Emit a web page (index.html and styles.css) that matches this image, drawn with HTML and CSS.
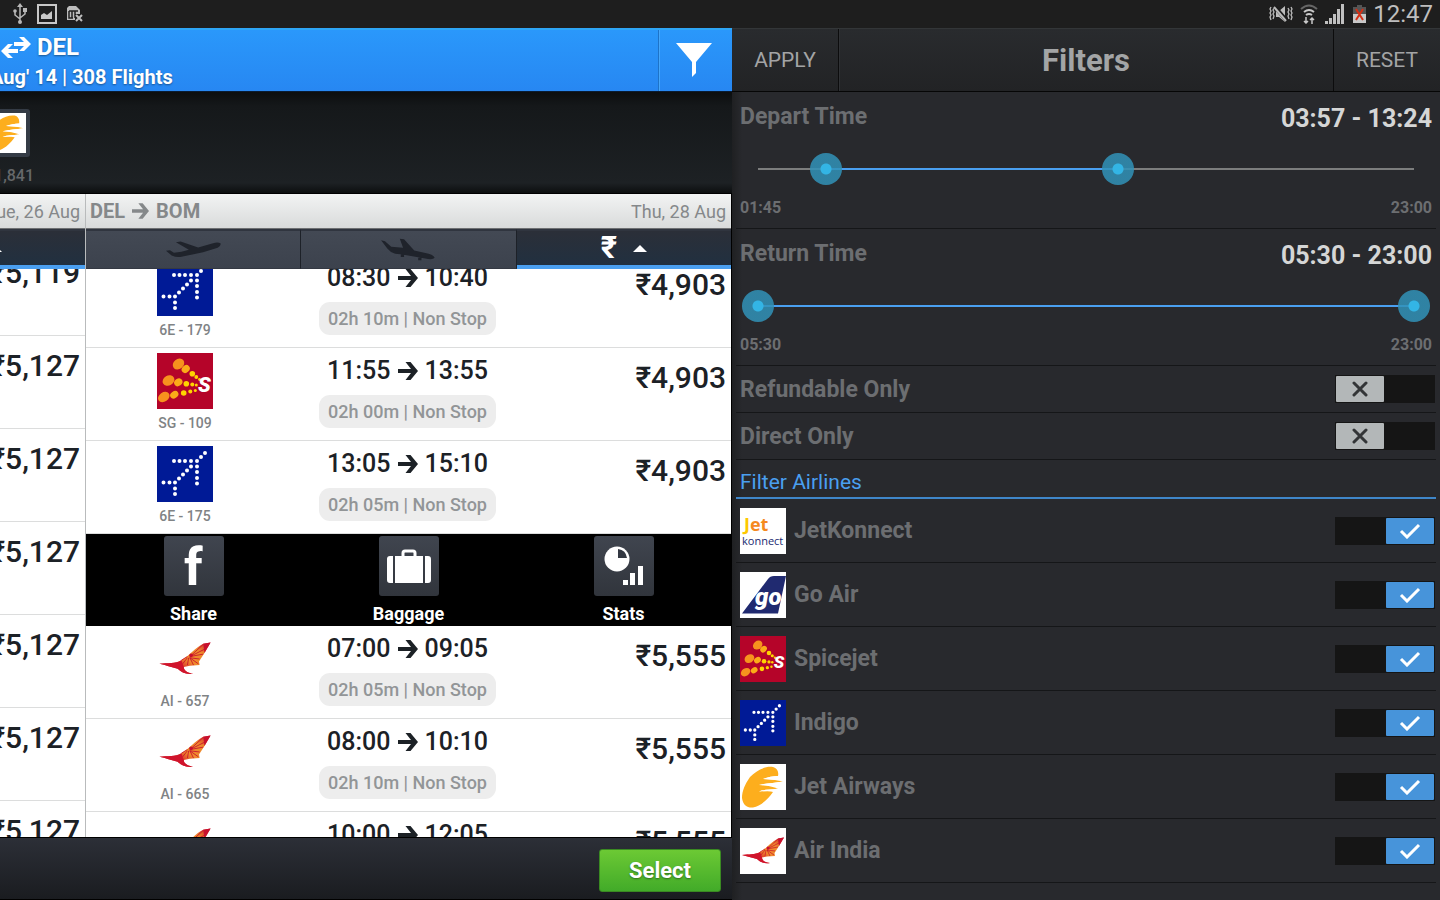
FILE: index.html
```
<!DOCTYPE html>
<html lang="en">
<head>
    <meta charset="utf-8">
    <title>Flights to DEL</title>
    <link rel="stylesheet" href="styles.css">
</head>
<body>
    <!-- Shared shapes -->
    <svg class="defs" width="0" height="0" aria-hidden="true">
        <linearGradient id="tail" x1="0" y1="1" x2="1" y2="0">
            <stop offset="0.3" stop-color="#d5262b"/>
            <stop offset="0.5" stop-color="#f08a2c"/>
            <stop offset="0.75" stop-color="#ee8a2c"/>
            <stop offset="1" stop-color="#c8102e"/>
        </linearGradient>
        <symbol id="arrow" viewBox="0 0 20 18">
            <path d="M0 7h13L7.500 0h5L20 9l-7.500 9h-5L13 11H0z" fill="currentColor"/>
        </symbol>
        <symbol id="indigo" viewBox="0 0 56 56">
            <rect width="56" height="56" fill="#001a96"/>
            <path d="M17 15h0M22.500 15h0M28 15h0M34 15h0M40 15h0M44 11h0M48 7h0M34 20.500h0M30 24.500h0M26 28.500h0M22 32.500h0M18 36.500h0M6.500 36.500h0M12.500 36.500h0M18 42.500h0M18 48h0M40 20.500h0M40 26h0M40 32h0M40 37.500h0" stroke="#fff" stroke-width="4" stroke-linecap="round"/>
        </symbol>
        <symbol id="spicejet" viewBox="0 0 56 56">
            <rect width="56" height="56" fill="#b50429"/>
            <g fill="#f7921e">
                <ellipse cx="21.500" cy="11" rx="6.200" ry="5" transform="rotate(-40 21.500 11)"/>
                <ellipse cx="11.500" cy="27.500" rx="6.200" ry="5" transform="rotate(-30 11.500 27.500)"/>
                <ellipse cx="6.800" cy="44" rx="6.200" ry="4.600" transform="rotate(-35 6.800 44)"/>
            </g>
            <g fill="#fbab18">
                <ellipse cx="28.700" cy="16" rx="4.400" ry="3.600" transform="rotate(-45 28.700 16)"/>
                <ellipse cx="21.300" cy="29.300" rx="4.400" ry="3.600" transform="rotate(-35 21.300 29.300)"/>
                <ellipse cx="17.300" cy="41.700" rx="4.400" ry="3.400" transform="rotate(-35 17.300 41.700)"/>
            </g>
            <g fill="#ffd400">
                <circle cx="35.300" cy="20.700" r="2.800"/><circle cx="39.300" cy="24" r="1.900"/><circle cx="42.500" cy="26.500" r="1.400"/>
                <circle cx="29.300" cy="30.700" r="2.800"/><circle cx="35.300" cy="31.500" r="2"/><circle cx="39.300" cy="32" r="1.500"/>
                <circle cx="26.700" cy="40" r="2.800"/><circle cx="33.300" cy="38.500" r="2"/><circle cx="38.300" cy="37.500" r="1.500"/>
            </g>
            <text x="41" y="39" class="logo-s">S</text>
        </symbol>
        <symbol id="airindia" viewBox="0 0 46 46">
            <rect width="46" height="46" fill="#fff"/>
            <path d="M2 27C9 26 15 27 20 24C27 20 31 14 38 10.500L44 9.500L39 18L34.500 25L35 28L27 28.500L22 29.500C22 33 26 34.500 30 35C24 36 20 34 17 31C12 30 7 28 2 27Z" fill="url(#tail)"/>
            <path d="M2 27C9 26 15 27 20 24L22 29.500C22 33 26 34.500 30 35C24 36 20 34 17 31C12 30 7 28 2 27Z" fill="#d0142c"/>
            <path d="M27 21l11-10M27 21l12-6M27 21l11-2M27 22l8 1M27 22l7 5M27 22l3 6M26 22l-1 6M25 22l-4 5M25 21l-5 3" stroke="#c8102e" stroke-width="0.700"/>
            <path d="M38 10.500L44 9.500L39 18z" fill="#c8102e"/>
            <circle cx="28" cy="20" r="1.500" fill="#c8102e"/>
        </symbol>
        <symbol id="jetairways" viewBox="0 0 46 46">
            <rect width="46" height="46" fill="#fff"/>
            <path d="M33 3C37 4 39 8 38 12C33 12 28 13 23 15C30 15 37 16 43 17.500C35 19 27 19 19 21C26 21 33 23 38 24.500C31 26 25 25 19 27.500C24 26 29 27 33 28C28 35 21 42 13 43.500C7 44 3 41 2 34C2 27 5 20 10 13C16 7 24 2 33 3Z" fill="#fdae1d"/>
            <path d="M38 12C33 12 28 13 23 15L41 16.500zM43 17.500C35 19 27 19 19 21L38 22.500zM38 24.500C31 26 25 25 19 27.500L34 27z" fill="#fff"/>
        </symbol>
        <symbol id="goair" viewBox="0 0 46 46">
            <rect width="46" height="46" fill="#fff"/>
            <path d="M2 41.500L28 7Q30 4 34 4H46L38 41.500Z" fill="#202a70"/>
            <text x="15" y="33" class="logo-go">go</text>
        </symbol>
        <symbol id="jetkonnect" viewBox="0 0 46 46">
            <rect width="46" height="46" fill="#fff"/>
            <text x="4" y="23" class="logo-jet"><tspan fill="#fdc800">J</tspan><tspan fill="#f58a1f">et</tspan></text>
            <text x="2" y="37" class="logo-konnect">konnect</text>
        </symbol>
        <symbol id="cross" viewBox="0 0 16 16">
            <path d="M2 2l12 12M14 2L2 14" fill="none" stroke="#333537" stroke-width="3" stroke-linecap="round"/>
        </symbol>
        <symbol id="tick" viewBox="0 0 22 16">
            <path d="M2 8l6 6L20 2" fill="none" stroke="#fff" stroke-width="3"/>
        </symbol>
    </svg>

    <div class="status">
        <div class="notices">
            <svg width="14" height="22" viewBox="0 0 14 22"><path d="M7 2v18M2 8v4l5 4M12 7v4l-5 4" fill="none" stroke="#b8b8b8" stroke-width="1.500"/><path d="M7 0l3 4H4z" fill="#b8b8b8"/><circle cx="7" cy="19" r="2" fill="#b8b8b8"/><circle cx="2" cy="8" r="1.800" fill="#b8b8b8"/><path d="M10 5h4v4h-4z" fill="#b8b8b8"/></svg>
            <svg width="20" height="20" viewBox="0 0 20 20"><path d="M1 1h18v18H1z" fill="none" stroke="#c8c8c8" stroke-width="2"/><path d="M4 15V11l3-2 3 2 5-4v8z" fill="#c8c8c8"/></svg>
            <svg width="16" height="18" viewBox="0 0 16 18"><path d="M0 3l2-2h7l4 4v10H0z" fill="#bdbdbd"/><path d="M2 6h9M5 6v7M8 6v7M2 6v7h4" fill="none" stroke="#222" stroke-width="1.500"/><path d="M8 9h8v9H8z" fill="#1e1e1e"/><path d="M9 10l6 6M15 10l-6 6" stroke="#bdbdbd" stroke-width="2"/></svg>
        </div>
        <svg width="24" height="18" viewBox="0 0 24 18"><path d="M2 2l-1 2 1 2-1 2 1 2-1 2 1 3M5 3L4 5l1 2-1 2 1 2-1 3M19 3l1 2-1 2 1 2-1 2 1 3M22 2l1 2-1 2 1 2-1 2 1 2-1 3" fill="none" stroke="#bbb" stroke-width="1.300"/><path d="M7 6h3l6-5v16l-6-5H7z" fill="#bbb"/><path d="M6 2l12 14" stroke="#1c1c1c" stroke-width="4"/><path d="M5 2l12 14" stroke="#bbb" stroke-width="2"/></svg>
        <svg width="18" height="20" viewBox="0 0 18 20"><path d="M1 5q8-7 16 0" fill="none" stroke="#666" stroke-width="2"/><path d="M4 8q5-4 10 0M6 11q3-2 6 0" fill="none" stroke="#c8c8c8" stroke-width="2"/><path d="M6 13v6M4 17l2 2 2-2M12 20v-6M10 16l2-2 2 2" fill="none" stroke="#c8c8c8" stroke-width="1.500"/></svg>
        <svg width="20" height="20" viewBox="0 0 20 20"><path d="M0 17h3v3H0zM4 14h3v6H4zM8 10h3v10H8zM12 5h3v15h-3zM16 0h3v20h-3z" fill="#c0c0c0"/></svg>
        <svg width="14" height="18" viewBox="0 0 14 18"><path d="M5 0h5v2h4v7H1V2h4z" fill="#555"/><path d="M1 9h13v9H1z" fill="#c8c8c8"/><path d="M4 4l7 11M11 4L4 15" stroke="#d52f14" stroke-width="2"/></svg>
        <time>12:47</time>
    </div>

    <main class="screen">
        <section class="results">
            <header class="trip-bar">
                <div class="trip">
                    <h1><svg width="30" height="21" viewBox="0 0 30 21"><path d="M13 5h10l-5-5h5l7 7-7 7h-5l5-5H13zM17 12H7l5-5H7l-7 7 7 7h5l-5-5h10z" fill="#fff"/></svg> DEL</h1>
                    <p>Aug' 14 | 308 Flights</p>
                </div>
                <button class="funnel" aria-label="Filter">
                    <svg width="36" height="36" viewBox="0 0 36 36"><path d="M0 0h36L20 19v11l-4 4V19z" fill="#fff"/></svg>
                </button>
            </header>

            <div class="strip">
                <div class="deal">
                    <span class="deal-logo"><svg width="40" height="40"><use href="#jetairways"/></svg></span>
                    <span class="deal-price">₹1,841</span>
                </div>
            </div>

            <div class="legs">
                <div class="leg leg-out">
                    <div class="leg-head"><span>Tue, 26 Aug</span></div>
                    <div class="tabs">
                        <button class="tab active" aria-label="Sort by price"><svg class="caret" width="14" height="7" viewBox="0 0 14 7"><path d="M0 7l7-7 7 7z" fill="#fff"/></svg></button>
                    </div>
                    <div class="list list-out">
                        <div class="row"><b>₹5,119</b></div>
                        <div class="row"><b>₹5,127</b></div>
                        <div class="row"><b>₹5,127</b></div>
                        <div class="row"><b>₹5,127</b></div>
                        <div class="row"><b>₹5,127</b></div>
                        <div class="row"><b>₹5,127</b></div>
                        <div class="row"><b>₹5,127</b></div>
                    </div>
                </div>

                <div class="leg leg-back">
                    <div class="leg-head">
                        <strong>DEL <svg width="17" height="16"><use href="#arrow"/></svg> BOM</strong>
                        <span>Thu, 28 Aug</span>
                    </div>
                    <div class="tabs">
                        <button class="tab" aria-label="Sort by departure"><svg width="57" height="19" viewBox="255 150 172 56"><path d="M423 160Q415 154 400 159L355 172L302 154L288 156L327 179Q305 186 282 188L270 180L258 182L275 196Q290 203 305 200L370 186L414 173Q424 167 423 160Z" fill="#1f232b"/></svg></button>
                        <button class="tab" aria-label="Sort by arrival"><svg width="56" height="23" viewBox="-57 140 168 70"><path d="M-55 147L-43 150L-24 167L12 170L2 142L15 144L46 178L90 188Q106 193 108 200Q104 206 88 204L10 190L-12 188Q-28 183 -36 172ZM5 190h10v8h-10zM58 200h10v8h-10z" fill="#1f232b"/></svg></button>
                        <button class="tab active" aria-label="Sort by price"><i>₹</i><svg class="caret" width="14" height="7" viewBox="0 0 14 7"><path d="M0 7l7-7 7 7z" fill="#fff"/></svg></button>
                    </div>
                    <div class="list list-back">
                        <div class="row">
                            <div class="carrier"><svg width="56" height="56"><use href="#indigo"/></svg><small>6E - 179</small></div>
                            <div class="times"><p>08:30 <svg width="20" height="18"><use href="#arrow"/></svg> 10:40</p><span class="pill">02h 10m | Non Stop</span></div>
                            <b>₹4,903</b>
                        </div>
                        <div class="row">
                            <div class="carrier"><svg width="56" height="56"><use href="#spicejet"/></svg><small>SG - 109</small></div>
                            <div class="times"><p>11:55 <svg width="20" height="18"><use href="#arrow"/></svg> 13:55</p><span class="pill">02h 00m | Non Stop</span></div>
                            <b>₹4,903</b>
                        </div>
                        <div class="row">
                            <div class="carrier"><svg width="56" height="56"><use href="#indigo"/></svg><small>6E - 175</small></div>
                            <div class="times"><p>13:05 <svg width="20" height="18"><use href="#arrow"/></svg> 15:10</p><span class="pill">02h 05m | Non Stop</span></div>
                            <b>₹4,903</b>
                        </div>
                        <div class="actions">
                            <button class="action"><span class="tile"><svg width="60" height="60" viewBox="0 0 60 60"><text x="20" y="49" class="logo-f">f</text></svg></span>Share</button>
                            <button class="action"><span class="tile"><svg width="60" height="60" viewBox="0 0 60 60"><path d="M24 20v-3q0-2 2-2h8q2 0 2 2v3" fill="none" stroke="#fff" stroke-width="3"/><path d="M16 20h28v27H16zM14 20v27h-3q-3 0-3-3V23q0-3 3-3zM46 20v27h3q3 0 3-3V23q0-3-3-3z" fill="#fff"/></svg></span>Baggage</button>
                            <button class="action"><span class="tile"><svg width="60" height="60" viewBox="0 0 60 60"><circle cx="23" cy="23" r="12.500" fill="#fff"/><path d="M24 22v-9q8 1 9 9z" fill="#333842"/><path d="M29 44h5v5h-5zM36 37h5v12h-5zM44 30h5v19h-5z" fill="#fff"/></svg></span>Stats</button>
                        </div>
                        <div class="row">
                            <div class="carrier"><svg width="56" height="56"><use href="#airindia"/></svg><small>AI - 657</small></div>
                            <div class="times"><p>07:00 <svg width="20" height="18"><use href="#arrow"/></svg> 09:05</p><span class="pill">02h 05m | Non Stop</span></div>
                            <b>₹5,555</b>
                        </div>
                        <div class="row">
                            <div class="carrier"><svg width="56" height="56"><use href="#airindia"/></svg><small>AI - 665</small></div>
                            <div class="times"><p>08:00 <svg width="20" height="18"><use href="#arrow"/></svg> 10:10</p><span class="pill">02h 10m | Non Stop</span></div>
                            <b>₹5,555</b>
                        </div>
                        <div class="row">
                            <div class="carrier"><svg width="56" height="56"><use href="#airindia"/></svg></div>
                            <div class="times"><p>10:00 <svg width="20" height="18"><use href="#arrow"/></svg> 12:05</p></div>
                            <b>₹5,555</b>
                        </div>
                    </div>
                </div>
            </div>

            <footer class="foot"><button class="select">Select</button></footer>
        </section>

        <aside class="filters">
            <header class="filter-bar">
                <button>APPLY</button>
                <h2>Filters</h2>
                <button>RESET</button>
            </header>

            <div class="range">
                <div class="range-head"><span>Depart Time</span><output>03:57 - 13:24</output></div>
                <div class="slider">
                    <div class="fill" style="left: 10.35%; width: 44.47%"></div>
                    <input type="range" min="105" max="1380" value="237" aria-label="Earliest departure">
                    <input type="range" min="105" max="1380" value="804" aria-label="Latest departure">
                </div>
                <div class="range-ends"><span>01:45</span><span>23:00</span></div>
            </div>
            <div class="range">
                <div class="range-head"><span>Return Time</span><output>05:30 - 23:00</output></div>
                <div class="slider">
                    <div class="fill" style="left: 0%; width: 100%"></div>
                    <input type="range" min="330" max="1380" value="330" aria-label="Earliest return">
                    <input type="range" min="330" max="1380" value="1380" aria-label="Latest return">
                </div>
                <div class="range-ends"><span>05:30</span><span>23:00</span></div>
            </div>

            <label class="option">Refundable Only<span class="switch"><input type="checkbox"><svg width="16" height="16"><use href="#cross"/></svg></span></label>
            <label class="option">Direct Only<span class="switch"><input type="checkbox"><svg width="16" height="16"><use href="#cross"/></svg></span></label>

            <h3>Filter Airlines</h3>
            <label class="option airline"><svg width="46" height="46"><use href="#jetkonnect"/></svg>JetKonnect<span class="switch on"><input type="checkbox" checked><svg width="22" height="16"><use href="#tick"/></svg></span></label>
            <label class="option airline"><svg width="46" height="46"><use href="#goair"/></svg>Go Air<span class="switch on"><input type="checkbox" checked><svg width="22" height="16"><use href="#tick"/></svg></span></label>
            <label class="option airline"><svg width="46" height="46"><use href="#spicejet"/></svg>Spicejet<span class="switch on"><input type="checkbox" checked><svg width="22" height="16"><use href="#tick"/></svg></span></label>
            <label class="option airline"><svg width="46" height="46"><use href="#indigo"/></svg>Indigo<span class="switch on"><input type="checkbox" checked><svg width="22" height="16"><use href="#tick"/></svg></span></label>
            <label class="option airline"><svg width="46" height="46"><use href="#jetairways"/></svg>Jet Airways<span class="switch on"><input type="checkbox" checked><svg width="22" height="16"><use href="#tick"/></svg></span></label>
            <label class="option airline"><svg width="46" height="46"><use href="#airindia"/></svg>Air India<span class="switch on"><input type="checkbox" checked><svg width="22" height="16"><use href="#tick"/></svg></span></label>
        </aside>
    </main>
</body>
</html>
```
FILE: styles.css
```
* {
    box-sizing: border-box;
}
body {
    margin: 0;
    height: 100vh;
    display: flex;
    flex-direction: column;
    overflow: hidden;
    font-family: Roboto, "Liberation Sans", sans-serif;
    background-color: #1c1c1c;
}
h1, h2, h3, p {
    margin: 0;
}
button {
    border: 0;
    padding: 0;
    font-family: inherit;
    background: none;
}
svg {
    display: block;
    flex: none;
}
.defs {
    position: absolute;
}

/* Status bar */
.status {
    height: 28px;
    flex: none;
    display: flex;
    align-items: center;
    gap: 7px;
    padding: 0 7px 0 13px;
    background-color: #1e1e1e;
}
.notices {
    flex: 1;
    display: flex;
    align-items: center;
    gap: 10px;
}
.status time {
    font-size: 24px;
    line-height: 28px;
    color: #bebebe;
}

.screen {
    flex: 1;
    min-height: 0;
    display: grid;
    grid-template-columns: 61fr 59fr;
}

/* Flight results */
.results {
    display: flex;
    flex-direction: column;
    min-width: 0;
    min-height: 0;
    background-color: #000;
}
.trip-bar {
    height: 64px;
    flex: none;
    display: flex;
    border-top: 2px solid #2ea6f5;
    border-bottom: 1px solid #0a1c33;
    background: linear-gradient(#2a98fb, #2787f2);
    color: #fff;
    overflow: hidden;
}
.trip {
    flex: 1;
    margin-left: -10px;
    padding-top: 2px;
    text-shadow: 0 1px 2px rgba(0, 0, 0, 0.4);
}
.trip h1 {
    display: flex;
    align-items: center;
    gap: 6px;
    padding-left: 11px;
    font-size: 24px;
    line-height: 30px;
    font-weight: 700;
}
.trip p {
    font-size: 20px;
    line-height: 30px;
    font-weight: 700;
}
.funnel {
    width: 74px;
    padding-right: 3px;
    display: grid;
    place-items: center;
    border-left: 1px solid #1d73c8;
    box-shadow: inset 1px 0 #45a7fb;
}
.strip {
    height: 102px;
    flex: none;
    padding-top: 17px;
    background: linear-gradient(#0c0e0f, #15181a 14%, #1d2124 90%, #0c0e0f);
    border-bottom: 1px solid #000;
}
.deal {
    width: 34px;
    display: flex;
    flex-direction: column;
    align-items: flex-end;
}
.deal-logo {
    margin-right: 4px;
    padding: 4px;
    border-radius: 3px;
    background-color: #343b45;
}
.deal-price {
    margin-top: 9px;
    font-size: 16px;
    line-height: 20px;
    font-weight: 500;
    color: #66686a;
}
.legs {
    flex: 1;
    min-height: 0;
    display: flex;
    padding-right: 1px;
}
.leg {
    display: flex;
    flex-direction: column;
    min-height: 0;
}
.leg-out {
    width: 86px;
    flex: none;
    overflow: hidden;
    border-right: 1px solid #b9bbbc;
}
.leg-back {
    flex: 1;
}
.leg-head {
    height: 35px;
    flex: none;
    display: flex;
    justify-content: space-between;
    align-items: center;
    padding: 0 5px 0 4px;
    border-bottom: 1px solid #6e7072;
    background: linear-gradient(#f2f3f3, #d9dbdb);
    color: #85888a;
    font-size: 18px;
    white-space: nowrap;
}
.leg-out .leg-head, .leg-out .row {
    justify-content: flex-end;
}
.leg-head strong {
    display: flex;
    align-items: center;
    gap: 7px;
    font-size: 20px;
    font-weight: 700;
}
.tabs {
    height: 40px;
    flex: none;
    display: flex;
}
.tab {
    flex: 1;
    display: flex;
    justify-content: center;
    align-items: center;
    gap: 16px;
    border-top: 2px solid #30353f;
    border-bottom: 1px solid #343943;
    border-right: 1px solid #1d2128;
    background: linear-gradient(#434954, #3c424d);
}
.tab.active {
    border-right: 0;
    border-bottom: 4px solid #4a9ff0;
    background: linear-gradient(#2b2f38, #213040);
}
.leg-out .tab {
    justify-content: flex-start;
}
.leg-out .caret {
    margin-left: -12px;
}
.tab i {
    color: #fff;
    font-size: 31px;
    line-height: 30px;
    font-style: normal;
    font-weight: 700;
}
.list {
    flex: 1;
    min-height: 0;
    overflow: hidden;
    background-color: #fff;
}
.row {
    height: 93px;
    display: flex;
    border-bottom: 1px solid #dcdddd;
}
.list-out .row:first-child {
    margin-top: -26px;
}
.list-back .row:first-child {
    margin-top: -14px;
}
.list-back .row {
    display: grid;
    grid-template-columns: 198px 1fr 200px;
}
.row b {
    padding: 12px 5px 0 0;
    font-size: 30px;
    line-height: 36px;
    font-weight: 500;
    text-align: right;
    color: #1c2126;
}
.carrier {
    display: flex;
    flex-direction: column;
    align-items: center;
    padding-top: 5px;
}
.carrier small {
    margin-top: 5px;
    font-size: 14px;
    line-height: 18px;
    font-weight: 500;
    color: #808385;
}
.times {
    display: flex;
    flex-direction: column;
    align-items: center;
    padding-top: 8px;
}
.times p {
    display: flex;
    align-items: center;
    gap: 7px;
    font-size: 25px;
    line-height: 30px;
    font-weight: 500;
    color: #1c2126;
}
.pill {
    margin-top: 9px;
    padding: 0 9px;
    border-radius: 11px;
    background-color: #ededed;
    font-size: 18px;
    line-height: 33px;
    font-weight: 500;
    color: #929597;
}
.actions {
    height: 92px;
    display: flex;
    background-color: #000;
}
.action {
    flex: 1;
    display: flex;
    flex-direction: column;
    align-items: center;
    padding-top: 2px;
    color: #fff;
    font-size: 18px;
    line-height: 24px;
    font-weight: 700;
}
.tile {
    margin-bottom: 6px;
    border-radius: 3px;
    background: linear-gradient(#40454f, #31353c);
}
.foot {
    height: 63px;
    flex: none;
    display: flex;
    justify-content: flex-end;
    align-items: flex-start;
    padding: 11px 11px 0 0;
    border-top: 1px solid #000;
    border-bottom: 1px solid #000;
    background: linear-gradient(#2c2f37, #1a1c20);
}
.select {
    width: 122px;
    height: 43px;
    border: 1px solid #3a8a22;
    border-radius: 3px;
    background: linear-gradient(#6cc934, #42ab29);
    color: #fff;
    font-size: 22px;
    font-weight: 700;
    text-shadow: 0 1px 2px rgba(0, 0, 0, 0.4);
}

/* Filter panel */
.filters {
    padding: 0 4px;
    background: linear-gradient(90deg, #1f2022, #28292d 10px);
    color: #6c6e71;
}
.filter-bar {
    height: 64px;
    margin: 0 -4px;
    display: flex;
    align-items: stretch;
    border-top: 1px solid #333638;
    border-bottom: 1px solid #060606;
    background: linear-gradient(#292b2e, #222325);
}
.filter-bar button {
    width: 106px;
    color: #a3a4a5;
    font-size: 21px;
}
.filter-bar h2 {
    flex: 1;
    border: solid #0c0c0d;
    border-width: 0 1px;
    box-shadow: inset 1px 0 #303235;
    font-size: 31px;
    line-height: 64px;
    font-weight: 700;
    text-align: center;
    color: #a3a5a6;
}
.range {
    height: 137px;
    padding: 9px 4px 0;
    border-bottom: 1px solid #151618;
}
.range-head {
    display: flex;
    justify-content: space-between;
    font-size: 23px;
    line-height: 32px;
    font-weight: 700;
}
.range-head output {
    padding-top: 2px;
    font-size: 25px;
    color: #d5d6d6;
}
.slider {
    position: relative;
    height: 32px;
    margin: 18px 18px 0;
    background: linear-gradient(#7c7d7d, #7c7d7d) center / 100% 2px no-repeat;
}
.slider .fill {
    position: absolute;
    top: 15px;
    height: 2px;
    background-color: #4a9ff0;
}
.slider input {
    position: absolute;
    top: 0;
    left: -16px;
    width: calc(100% + 32px);
    height: 32px;
    margin: 0;
    appearance: none;
    background: none;
    pointer-events: none;
}
.slider input::-webkit-slider-thumb {
    appearance: none;
    width: 32px;
    height: 32px;
    border-radius: 50%;
    background: radial-gradient(#33b5e5 5px, rgba(49, 146, 184, 0.85) 6px);
    pointer-events: auto;
}
.range-ends {
    display: flex;
    justify-content: space-between;
    margin-top: 13px;
    font-size: 16px;
    line-height: 20px;
    font-weight: 700;
}
.option {
    height: 47px;
    display: flex;
    align-items: center;
    gap: 8px;
    padding: 0 1px 0 4px;
    border-bottom: 1px solid #151618;
    font-size: 23px;
    font-weight: 700;
}
.switch {
    width: 100px;
    height: 28px;
    margin-left: auto;
    display: grid;
    grid-template-columns: 50px 50px;
    align-items: center;
    justify-items: center;
    background-color: #151515;
}
.switch input {
    grid-area: 1 / 1;
    width: 48px;
    height: 26px;
    margin: 0;
    appearance: none;
    border-radius: 1px;
    background-color: #b3b7b8;
}
.switch svg {
    grid-area: 1 / 1;
    pointer-events: none;
    position: relative;
}
.switch.on input, .switch.on svg {
    grid-area: 1 / 2;
}
.switch.on input {
    background-color: #4794da;
}
.filters h3 {
    height: 39px;
    padding-left: 4px;
    border-bottom: 2px solid #3f86c9;
    font-size: 21px;
    line-height: 44px;
    font-weight: 400;
    color: #4a9ff0;
}
.airline {
    height: 64px;
}

/* Lettering inside logos */
.logo-s {
    fill: #fff;
    font: italic 900 21px Roboto, sans-serif;
}
.logo-f {
    fill: #fff;
    font: 700 52px Roboto, sans-serif;
}
.logo-go {
    fill: #fff;
    font: italic 900 24px Roboto, sans-serif;
}
.logo-jet {
    font: 700 18px "Open Sans", sans-serif;
}
.logo-konnect {
    fill: #202a70;
    font: 400 11px "Open Sans", sans-serif;
}
```
